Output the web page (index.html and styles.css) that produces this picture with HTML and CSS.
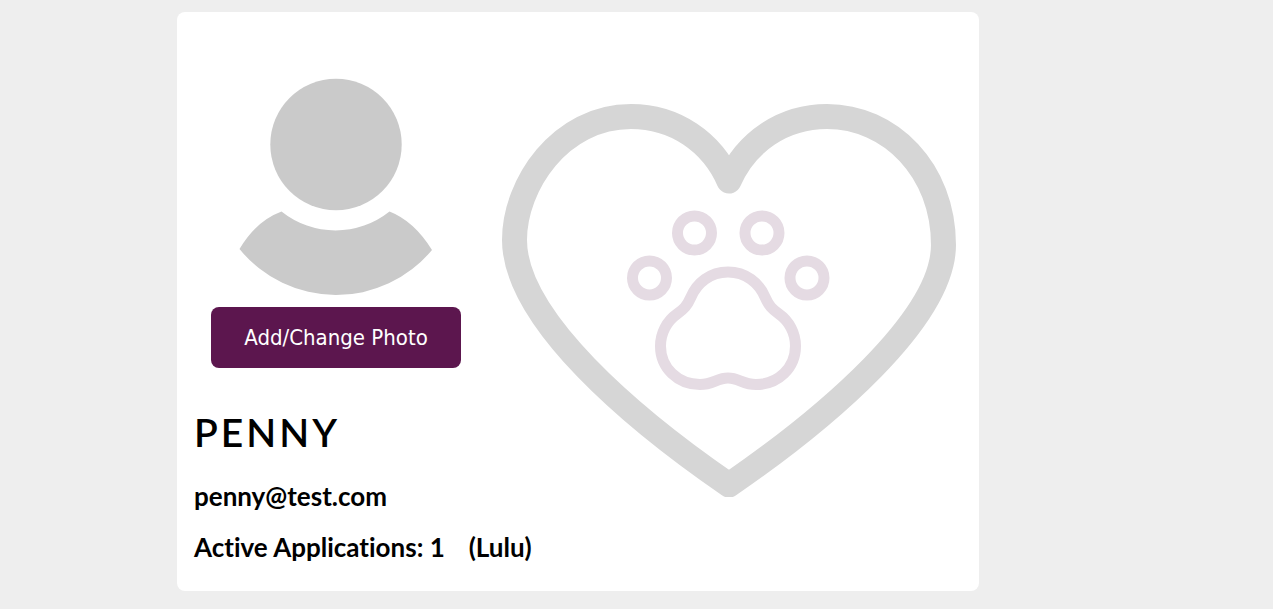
FILE: index.html
```html
<!DOCTYPE html>
<html lang="en">
<head>
<meta charset="utf-8">
<meta name="viewport" content="width=device-width, initial-scale=1">
<title>Penny</title>
<link rel="stylesheet" href="styles.css">
</head>
<body>
<main class="profile-card">
  <section class="photo">
    <svg class="avatar" viewBox="211 54 250 250" aria-hidden="true">
      <circle cx="336" cy="144.5" r="65.7"/>
      <path d="M281.500 211.500A86.500 86.500 0 0 0 389.500 211.500Q414 221 432 250A124.500 124.500 0 0 1 239.500 249Q256 221 281.500 211.500Z"/>
    </svg>
    <button class="photo-button" type="button">Add/Change Photo</button>
  </section>
  <section class="identity">
    <h1 class="name">PENNY</h1>
    <p class="detail">penny@test.com</p>
  </section>
  <svg class="emblem" viewBox="502 103 454 394" aria-hidden="true">
    <path class="heart" d="M729 181C712 142 675 116.500 631 116.500C560 116.500 514.500 185 514.500 240C514.500 319 633 419 729 485C825 419 943.500 319 943.500 245C943.500 170 890 116.500 827 116.500C783 116.500 746 142 729 181Z"/>
    <g class="paw">
      <circle cx="694.500" cy="233" r="17"/>
      <circle cx="762" cy="233" r="17"/>
      <circle cx="649.500" cy="278" r="17"/>
      <circle cx="807" cy="278" r="17"/>
      <path d="M728 272C710 272 697 283 691 297C687 306 684 309 677 314C667 321 660.500 333 660.500 346C660.500 368 678 384.500 700 384.500C713 384.500 717 378 728 378C739 378 743 384.500 756 384.500C778 384.500 795.500 368 795.500 346C795.500 333 789 321 779 314C772 309 769 306 765 297C759 283 746 272 728 272Z"/>
    </g>
  </svg>
  <p class="detail applications"><span>Active Applications: 1</span><span>(Lulu)</span></p>
</main>
</body>
</html>
```
FILE: styles.css
```css
* {
  box-sizing: border-box;
}

body {
  margin: 0;
  padding: 12px 0 18px;
  background: #eeeeee;
  color: #000;
  font-family: Lato, "Liberation Sans", sans-serif;
  font-variant-ligatures: none;
}

.profile-card {
  display: grid;
  grid-template-columns: 284px minmax(0, 1fr);
  grid-template-rows: auto 1fr auto;
  column-gap: 24px;
  width: 63%;
  margin-left: 177px;
  padding: 42px 23px 28px 17px;
  border-radius: 8px;
  background: #fff;
}

.photo {
  display: flex;
  flex-direction: column;
  align-items: flex-start;
  gap: 3px;
  padding-left: 17px;
}

.avatar {
  width: 250px;
  height: 250px;
  fill: #cacaca;
}

.photo-button {
  padding: 16px 24px;
  min-width: 250px;
  border: 0;
  border-radius: 8px;
  background: #5c164e;
  color: #fff;
  font-family: "DejaVu Sans Condensed", "Noto Sans", sans-serif;
  font-size: 22px;
  line-height: 29px;
  white-space: nowrap;
  cursor: pointer;
}

.identity {
  grid-column: 1;
  padding-top: 40px;
}

.name {
  margin: 0;
  font-size: 39px;
  font-weight: 600;
  line-height: 48px;
  letter-spacing: 3px;
}

.detail {
  margin: 24px 0 0;
  font-size: 26px;
  font-weight: 700;
  line-height: 32px;
}

.emblem {
  grid-column: 2;
  grid-row: 1 / 3;
  width: 100%;
  margin-top: 49px;
}

.heart,
.paw {
  fill: none;
  stroke-linejoin: round;
}

.heart {
  stroke: #d6d6d6;
  stroke-width: 25px;
}

.paw {
  stroke: #e5dbe3;
  stroke-width: 11px;
}

.applications {
  grid-column: 1 / 3;
  display: flex;
  gap: 24px;
  margin-top: 19px;
}
```
